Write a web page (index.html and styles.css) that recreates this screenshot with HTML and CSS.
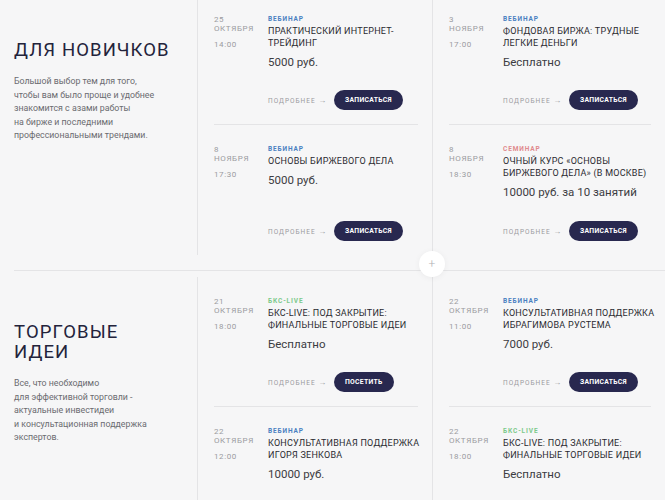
FILE: index.html
```html
<!DOCTYPE html>
<html lang="ru">
<head>
<meta charset="utf-8">
<link rel="stylesheet" href="styles.css">
</head>
<body>
<div class="page">
  <section class="sect">
    <div class="intro">
      <h2>Для новичков</h2>
      <p>Большой выбор тем для того,<br>чтобы вам было проще и удобнее<br>знакомится с азами работы<br>на бирже и последними<br>профессиональными трендами.</p>
    </div>
    <div class="col">
      <div class="card">
        <div class="date"><span>25</span><span>октября</span><span class="time">14:00</span></div>
        <div class="info">
          <div class="tag web">Вебинар</div>
          <div class="title">Практический интернет-<br>трейдинг</div>
          <div class="price">5000 руб.</div>
          <div class="actions"><span class="more">Подробнее <span class="arr">→</span></span><button class="btn">Записаться</button></div>
        </div>
      </div>
      <div class="card">
        <div class="date"><span>8</span><span>ноября</span><span class="time">17:30</span></div>
        <div class="info">
          <div class="tag web">Вебинар</div>
          <div class="title">Основы биржевого дела</div>
          <div class="price">5000 руб.</div>
          <div class="actions"><span class="more">Подробнее <span class="arr">→</span></span><button class="btn">Записаться</button></div>
        </div>
      </div>
    </div>
    <div class="col">
      <div class="card">
        <div class="date"><span>3</span><span>ноября</span><span class="time">17:00</span></div>
        <div class="info">
          <div class="tag web">Вебинар</div>
          <div class="title">Фондовая биржа: трудные<br>легкие деньги</div>
          <div class="price">Бесплатно</div>
          <div class="actions"><span class="more">Подробнее <span class="arr">→</span></span><button class="btn">Записаться</button></div>
        </div>
      </div>
      <div class="card">
        <div class="date"><span>8</span><span>ноября</span><span class="time">18:30</span></div>
        <div class="info">
          <div class="tag sem">Семинар</div>
          <div class="title">Очный курс «Основы<br>биржевого дела» (в Москве)</div>
          <div class="price">10000 руб. за 10 занятий</div>
          <div class="actions"><span class="more">Подробнее <span class="arr">→</span></span><button class="btn">Записаться</button></div>
        </div>
      </div>
    </div>
  </section>

  <div class="divider"><span class="plus">+</span></div>

  <section class="sect">
    <div class="intro">
      <h2>Торговые<br>идеи</h2>
      <p>Все, что необходимо<br>для эффективной торговли -<br>актуальные инвестидеи<br>и консультационная поддержка<br>экспертов.</p>
    </div>
    <div class="col">
      <div class="card">
        <div class="date"><span>21</span><span>октября</span><span class="time">18:00</span></div>
        <div class="info">
          <div class="tag live">БКС-Live</div>
          <div class="title">БКС-Live: под закрытие:<br>финальные торговые идеи</div>
          <div class="price">Бесплатно</div>
          <div class="actions"><span class="more">Подробнее <span class="arr">→</span></span><button class="btn">Посетить</button></div>
        </div>
      </div>
      <div class="card">
        <div class="date"><span>22</span><span>октября</span><span class="time">12:00</span></div>
        <div class="info">
          <div class="tag web">Вебинар</div>
          <div class="title">Консультативная поддержка<br>Игоря Зенкова</div>
          <div class="price">10000 руб.</div>
          <div class="actions"><span class="more">Подробнее <span class="arr">→</span></span><button class="btn">Записаться</button></div>
        </div>
      </div>
    </div>
    <div class="col">
      <div class="card">
        <div class="date"><span>22</span><span>октября</span><span class="time">11:00</span></div>
        <div class="info">
          <div class="tag web">Вебинар</div>
          <div class="title">Консультативная поддержка<br>Ибрагимова Рустема</div>
          <div class="price">7000 руб.</div>
          <div class="actions"><span class="more">Подробнее <span class="arr">→</span></span><button class="btn">Записаться</button></div>
        </div>
      </div>
      <div class="card">
        <div class="date"><span>22</span><span>октября</span><span class="time">18:00</span></div>
        <div class="info">
          <div class="tag live">БКС-Live</div>
          <div class="title">БКС-Live: под закрытие:<br>финальные торговые идеи</div>
          <div class="price">Бесплатно</div>
          <div class="actions"><span class="more">Подробнее <span class="arr">→</span></span><button class="btn">Записаться</button></div>
        </div>
      </div>
    </div>
  </section>
</div>
</body>
</html>
```

FILE: styles.css
```css
html, body {
  margin: 0;
  padding: 0;
  background: #f6f6f7;
  overflow: hidden;
}
body {
  font-family: Roboto, "Liberation Sans", sans-serif;
  color: #333;
}
.page {
  margin-top: -5px;
}
.sect {
  display: grid;
  grid-template-columns: 197px 235px 233px;
  padding-bottom: 15px;
}
.sect + .divider + .sect {
  padding-top: 6px;
}
.intro {
  padding: 45px 0 0 14px;
}
.intro h2 {
  margin: 0;
  font-size: 18.5px;
  line-height: 20px;
  font-weight: 400;
  letter-spacing: 1.1px;
  text-transform: uppercase;
  color: #23233b;
}
.intro p {
  margin: 15px 0 0;
  font-size: 8.8px;
  line-height: 13.5px;
  color: #6b6b70;
  white-space: nowrap;
}
.col {
  border-left: 1px solid #e4e4e6;
}
.card {
  box-sizing: border-box;
  height: 130px;
  margin: 0 14px 0 16px;
  padding: 20px 0 14px;
  display: grid;
  grid-template-columns: 54px 1fr;
  border-bottom: 1px solid #e4e4e6;
}
.card:last-child {
  border-bottom: 0;
}
.date {
  display: flex;
  flex-direction: column;
  font-size: 8px;
  line-height: 9px;
  letter-spacing: 0.6px;
  text-transform: uppercase;
  color: #9b9b9f;
}
.date .time {
  margin-top: 7px;
}
.info {
  display: flex;
  flex-direction: column;
  min-width: 0;
}
.tag {
  font-size: 6.5px;
  line-height: 9px;
  font-weight: 700;
  letter-spacing: 0.9px;
  text-transform: uppercase;
}
.tag.web { color: #4a7fc1; }
.tag.sem { color: #e0898d; }
.tag.live { color: #7cc98b; }
.title {
  margin-top: 1px;
  font-size: 9px;
  line-height: 12px;
  letter-spacing: 0.25px;
  text-transform: uppercase;
  color: #2a2a30;
  white-space: nowrap;
}
.price {
  margin-top: 6px;
  font-size: 11.5px;
  line-height: 14px;
  color: #3c3c42;
  white-space: nowrap;
}
.actions {
  margin-top: auto;
  display: flex;
  align-items: center;
}
.more {
  width: 66px;
  font-size: 6.5px;
  letter-spacing: 1px;
  text-transform: uppercase;
  color: #9a9a9e;
  white-space: nowrap;
}
.more .arr {
  font-size: 8px;
  letter-spacing: 0;
}
.btn {
  height: 20px;
  padding: 0 11px;
  border: 0;
  border-radius: 10px;
  background: #28284f;
  color: #fff;
  font-family: inherit;
  font-size: 6.8px;
  font-weight: 700;
  letter-spacing: 0.3px;
  text-transform: uppercase;
}
.divider {
  position: relative;
  margin-left: 14px;
  border-top: 1px solid #e4e4e6;
}
.plus {
  position: absolute;
  left: 405px;
  top: -20px;
  width: 26px;
  height: 26px;
  border-radius: 50%;
  background: #fff;
  box-shadow: 0 1px 6px rgba(0, 0, 0, 0.05);
  color: #b0b0b4;
  font-size: 12px;
  line-height: 26px;
  text-align: center;
  font-weight: 300;
}
```
